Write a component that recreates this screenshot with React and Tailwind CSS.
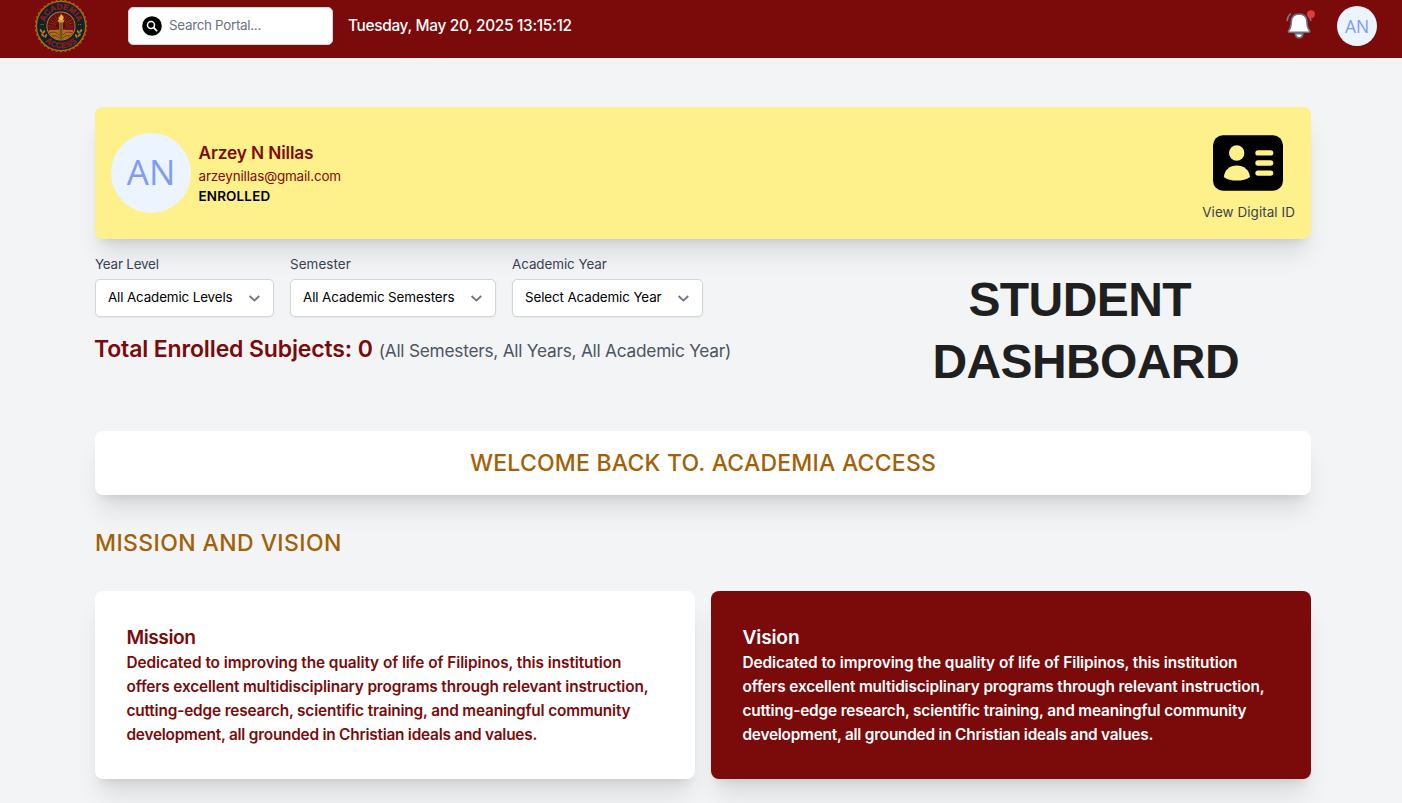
import React from 'react';

const gears = Array.from({ length: 36 }, (_, i) => i * 10);
const rays = Array.from({ length: 13 }, (_, i) => -90 + i * 15);

function Logo() {
  return (
    <svg className="h-[54px] w-[54px] shrink-0" viewBox="-27 -27 54 54" role="img" aria-label="Academia Access">
      <defs>
        <path id="arcTop" d="M-16.6 0A16.6 16.6 0 0 1 16.6 0" />
        <path id="arcBottom" d="M-22.3 0A22.3 22.3 0 0 0 22.3 0" />
      </defs>
      <circle r="25.3" fill="#b9700f" />
      {gears.map((a) => (
        <circle key={a} r="1.3" cy="-25.1" fill="#a8620f" transform={`rotate(${a})`} />
      ))}
      <circle r="24" fill="#10222c" />
      <circle r="14.6" fill="#c27a1c" />
      <circle r="13.6" fill="#5e0c10" />
      <g stroke="#8f2a18" strokeWidth="0.9">
        {rays.map((a) => (
          <path key={a} d="M0 -5V-13" transform={`rotate(${a})`} />
        ))}
      </g>
      <path d="M-12.6 5C-8 2 -4 4 0 4S8 2 12.6 5A13.6 13.6 0 0 1 -12.6 5Z" fill="#b0701c" />
      <path d="M-11.5 7C-6 5 -4 7 -2 9M11.5 7C6 5 4 7 2 9M-9 10C-6 9 -4 10 -2 12M9 10C6 9 4 10 2 12" stroke="#5b2a10" strokeWidth="0.8" fill="none" />
      <path d="M-12 4V0H-9V-2H-6V1H-4V4ZM12 4V0H9V-2H6V1H4V4Z" fill="#74141a" />
      <path d="M-2 -4H2V13.4H-2Z" fill="#8a6424" />
      <path d="M0 -4V13" stroke="#4a3a18" strokeWidth="0.8" />
      <path d="M-3.4 -6H3.4L2.4 -3.5H-2.4Z" fill="#d99a35" />
      <path d="M0 -12C3 -9.5 3.2 -7.5 1.8 -6H-1.8C-3.6 -8 -1 -9 0 -12Z" fill="#f0b04a" />
      <g fill="#b57a1e">
        <ellipse cx="-19.8" cy="5" rx="1" ry="2.2" transform="rotate(-35 -19.8 5)" />
        <ellipse cx="-17.2" cy="6" rx="1" ry="2.2" transform="rotate(35 -17.2 6)" />
        <ellipse cx="-18.2" cy="9.2" rx="1" ry="2.2" transform="rotate(-50 -18.2 9.2)" />
        <ellipse cx="-15.2" cy="10" rx="1" ry="2.2" transform="rotate(20 -15.2 10)" />
        <ellipse cx="19.8" cy="5" rx="1" ry="2.2" transform="rotate(35 19.8 5)" />
        <ellipse cx="17.2" cy="6" rx="1" ry="2.2" transform="rotate(-35 17.2 6)" />
        <ellipse cx="18.2" cy="9.2" rx="1" ry="2.2" transform="rotate(50 18.2 9.2)" />
        <ellipse cx="15.2" cy="10" rx="1" ry="2.2" transform="rotate(-20 15.2 10)" />
      </g>
      <path d="M-20.5 -1.5H-17M17 -1.5H20.5" stroke="#8d6a2a" strokeWidth="1" strokeDasharray="1.2 0.8" />
      <g fill="#8f1c1e" stroke="#8f1c1e" strokeWidth="0.3" fontFamily="'Liberation Sans', sans-serif" fontWeight="700" fontSize="8.2" textAnchor="middle">
        <text><textPath href="#arcTop" startOffset="50%">ACADEMIA</textPath></text>
        <text letterSpacing="0.3"><textPath href="#arcBottom" startOffset="50%">ACCESS</textPath></text>
      </g>
    </svg>
  );
}

function Bell() {
  return (
    <svg className="h-8 w-8 shrink-0" viewBox="0 0 32 32" fill="none">
      <path d="M3.2 10.4C3.5 7.6 4.6 5.6 6.3 4" stroke="#7b7680" strokeWidth="1.7" strokeLinecap="round" />
      <path d="M26.8 10.4C26.6 9 26.2 8 25.5 7" stroke="#7b7680" strokeWidth="1.7" strokeLinecap="round" />
      <path d="M11.4 23.6H18.8C18.6 26.4 17.2 27.8 15.1 27.8S11.6 26.4 11.4 23.6Z" fill="#fff" stroke="#6b7280" strokeWidth="1.6" />
      <path d="M15.1 4C10.2 4 7.6 7 7.3 11.6C7.1 15.2 7 17.8 4.9 20.2C3.9 21.4 4.3 22.3 5.6 22.3H24.6C25.9 22.3 26.3 21.4 25.3 20.2C23.2 17.8 23.1 15.2 22.9 11.6C22.6 7 20 4 15.1 4Z" fill="#fff" stroke="#6b7280" strokeWidth="1.6" />
      <circle cx="27" cy="4.2" r="3.9" fill="#e03c3c" />
    </svg>
  );
}

function IdCard() {
  return (
    <svg className="h-[56px] w-[70px]" viewBox="0 0 70 56">
      <rect y="0.3" width="70" height="55.4" rx="10" fill="#000" />
      <g fill="#fef08a">
        <circle cx="23.7" cy="18" r="7.7" />
        <path d="M10.8 42C11.6 35 16.5 30.5 23.8 30.5S36.2 35 37 42C33.5 44.6 29 45.6 23.8 45.6S14 44.6 10.8 42Z" />
        <rect x="42.3" y="15.2" width="18" height="5.4" rx="2.7" />
        <rect x="42.3" y="25.3" width="18" height="5.4" rx="2.7" />
        <rect x="42.3" y="35.4" width="18" height="5.4" rx="2.7" />
      </g>
    </svg>
  );
}

function Select({ label, value, labelClass, valueClass, width }) {
  return (
    <div className={`flex flex-col ${width}`}>
      <label className={`text-[13.4px] leading-5 text-[#374151] ${labelClass}`}>{label}</label>
      <button className="mt-[5px] flex h-[38px] items-center justify-between rounded-[5px] border border-gray-300 bg-white pr-[11px] pl-3 shadow-xs">
        <span className={`pb-[2px] text-[13.4px] leading-5 whitespace-nowrap text-black ${valueClass}`}>{value}</span>
        <svg className="h-4 w-4" viewBox="0 0 16 16" fill="none" stroke="#6b7280" strokeWidth="1.8">
          <path d="M3.6 6L8.4 10.6L13.2 6" />
        </svg>
      </button>
    </div>
  );
}

const body = [
  ['Dedicated to improving the quality of life of Filipinos, this institution', 'tracking-[-0.06px]'],
  ['offers excellent multidisciplinary programs through relevant instruction,', 'tracking-[-0.14px]'],
  ['cutting-edge research, scientific training, and meaningful community', 'tracking-[-0.15px]'],
  ['development, all grounded in Christian ideals and values.', 'tracking-[-0.22px]'],
];

function Statement({ title, className, titleClass }) {
  return (
    <section className={`rounded-lg p-8 pl-[31.5px] shadow-xl ${className}`}>
      <h3 className={`text-[19.2px] leading-7 font-semibold ${titleClass}`}>{title}</h3>
      <p className="text-[15.36px] leading-6 font-semibold whitespace-nowrap">
        {body.map(([line, tracking]) => (
          <span key={line} className={`block ${tracking}`}>{line}</span>
        ))}
      </p>
    </section>
  );
}

export default function App() {
  return (
    <div className="h-[803px] overflow-hidden bg-[#f3f4f6] font-['Inter',sans-serif]">
      <header className="flex h-[58px] items-center bg-[#7b0a0a] pr-[25px] pb-[6px] pl-[34px]">
        <Logo />
        <div className="ml-10 flex h-[38px] w-[205px] items-center rounded-[5px] border border-gray-300 bg-white pl-[13px]">
          <svg className="h-5 w-5" viewBox="0 0 20 20" fill="none">
            <circle cx="10" cy="10" r="9.8" fill="#000" />
            <circle cx="9" cy="9" r="3.5" stroke="#fff" strokeWidth="1.5" />
            <path d="M11.7 11.7L14.6 14.6" stroke="#fff" strokeWidth="1.8" strokeLinecap="round" />
          </svg>
          <span className="ml-[7px] pb-px text-[13.4px] tracking-[-0.3px] text-gray-500">Search Portal...</span>
        </div>
        <time className="ml-[15px] text-[15.36px] font-medium tracking-[-0.3px] text-white">Tuesday, May 20, 2025 13:15:12</time>
        <div className="ml-auto flex items-center gap-[21px]">
          <Bell />
          <div className="flex h-10 w-10 items-center justify-center rounded-full bg-[#ebf4ff] font-['Open_Sans',sans-serif] text-[17.5px] text-[#7f9cf5]">AN</div>
        </div>
      </header>

      <main className="mr-[91px] ml-[95px] pt-[49px]">
        <section className="flex h-[132px] items-center justify-between rounded-lg bg-[#fef08a] px-4 shadow-xl">
          <div className="flex items-center gap-[7.5px]">
            <div className="flex h-20 w-20 items-center justify-center rounded-full bg-[#ebf4ff] pb-px font-['Open_Sans',sans-serif] text-[35px] text-[#7f9cf5]">AN</div>
            <div className="pb-px">
              <h2 className="text-[17.3px] leading-[27px] font-semibold tracking-[-0.14px] text-[#7b0a0a]">Arzey N Nillas</h2>
              <p className="text-[13.4px] leading-5 tracking-[-0.13px] text-[#7b0a0a]">arzeynillas@gmail.com</p>
              <p className="text-[13.4px] leading-5 font-semibold tracking-[0.2px] text-black">ENROLLED</p>
            </div>
          </div>
          <div className="flex flex-col items-center gap-[11px] pt-[10px]">
            <div className="pr-[2px]">
              <IdCard />
            </div>
            <span className="text-[13.4px] leading-5 tracking-[0.09px] text-[#374151]">View Digital ID</span>
          </div>
        </section>

        <div className="flex h-[192px] justify-between">
          <div className="pt-[15px]">
            <div className="flex gap-4">
              <Select label="Year Level" value="All Academic Levels" width="w-[179px]" labelClass="tracking-[-0.2px]" valueClass="tracking-[-0.13px]" />
              <Select label="Semester" value="All Academic Semesters" width="w-[206px]" labelClass="tracking-[0.09px]" valueClass="tracking-[-0.1px]" />
              <Select label="Academic Year" value="Select Academic Year" width="w-[191px]" labelClass="tracking-[-0.06px]" valueClass="tracking-[-0.11px]" />
            </div>
            <div className="mt-4 -ml-px flex items-baseline gap-[6px] whitespace-nowrap">
              <h2 className="text-[23px] leading-8 font-semibold tracking-[-0.14px] text-[#7b0a0a]">Total Enrolled Subjects: 0</h2>
              <span className="text-[17.3px] tracking-[-0.25px] text-[#4b5563]">(All Semesters, All Years, All Academic Year)</span>
            </div>
          </div>
          <h1 className="mr-[72px] pt-[30px] text-center font-['Liberation_Sans',sans-serif] text-[48px] leading-[62px] font-bold tracking-[-0.6px] text-[#1f1f1f]">
            <span className="block pr-[12px]">STUDENT</span>
            <span className="block">DASHBOARD</span>
          </h1>
        </div>

        <section className="flex h-16 items-center justify-center rounded-lg bg-white shadow-xl">
          <h2 className="text-[23px] font-medium tracking-[0.22px] text-[#a16207]">WELCOME BACK TO. ACADEMIA ACCESS</h2>
        </section>
        <h2 className="mt-8 text-[23px] leading-8 font-medium tracking-[0.4px] text-[#a16207]">MISSION AND VISION</h2>
        <div className="mt-8 grid grid-cols-2 gap-4">
          <Statement title="Mission" className="bg-white text-[#7b0a0a]" titleClass="tracking-[-0.47px]" />
          <Statement title="Vision" className="bg-[#7b0a0a] text-white" titleClass="tracking-[-0.17px]" />
        </div>
      </main>
    </div>
  );
}
